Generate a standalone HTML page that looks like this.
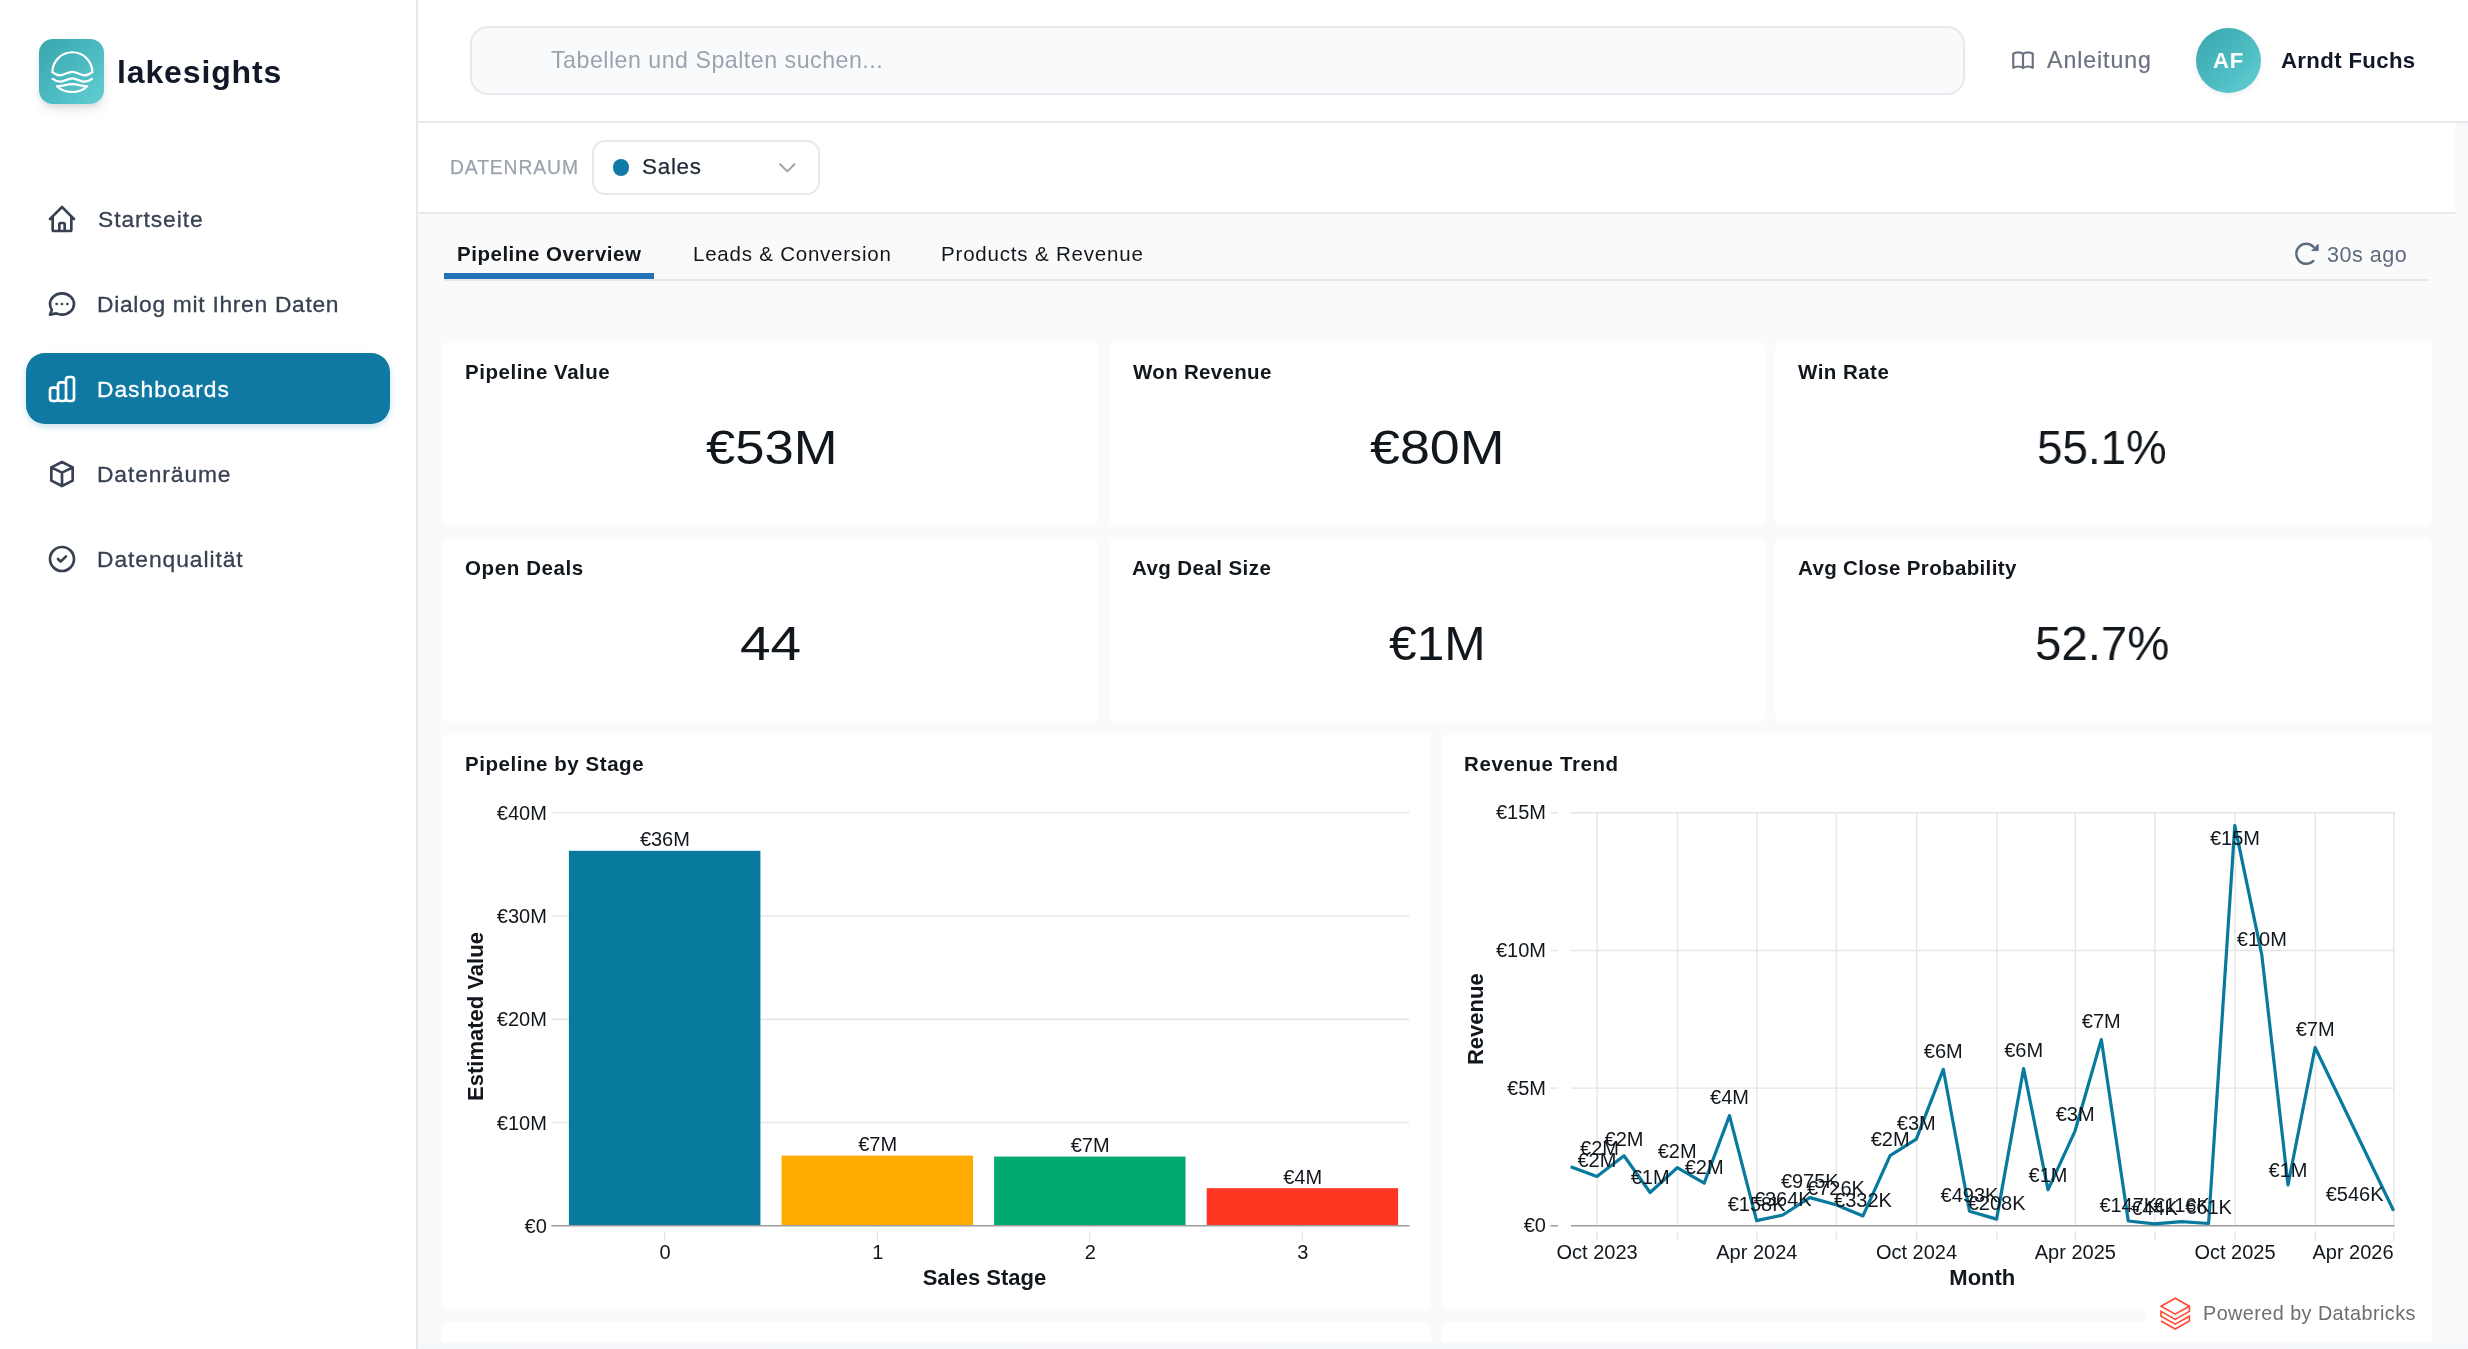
<!DOCTYPE html>
<html lang="de">
<head>
<meta charset="utf-8">
<title>lakesights</title>
<style>
*{box-sizing:border-box;margin:0;padding:0}
html,body{width:2468px;height:1349px;overflow:hidden;background:#fafafa}
body{font-family:"Liberation Sans",sans-serif;color:#111827;position:relative}
.abs{position:absolute}
.t{position:absolute;white-space:nowrap;line-height:1;will-change:transform}
svg{position:absolute;overflow:visible}
svg text{font-family:"Liberation Sans",sans-serif}
.card{position:absolute;background:#fff;border-radius:8px}
</style>
</head>
<body>

<div class="abs" style="left:0;top:0;width:416px;height:1349px;background:#fff"></div>
<div class="abs" style="left:416px;top:0;width:2px;height:1349px;background:#e7e8ec"></div>
<div class="abs" style="left:418px;top:0;width:2050px;height:121px;background:#fff"></div>
<div class="abs" style="left:418px;top:121px;width:2050px;height:2px;background:#e7e9ec"></div>
<div class="abs" style="left:2455px;top:123px;width:13px;height:1226px;background:#f8f9fb"></div>
<div class="abs" style="left:418px;top:123px;width:2037px;height:89px;background:#fff"></div>
<div class="abs" style="left:418px;top:212px;width:2037px;height:2px;background:#e7e9ec"></div>
<div class="abs" style="left:39px;top:39px;width:65.4px;height:65.4px;border-radius:14px;background:linear-gradient(135deg,#38a6ac 0%,#4dbcc2 55%,#62cfd4 100%);box-shadow:0 7px 12px -2px rgba(0,0,0,.11),0 3px 5px -1px rgba(0,0,0,.07)"></div>
<svg style="left:39px;top:39px" width="66" height="66" viewBox="0 0 66 66" fill="none" stroke="#fff" stroke-width="2.2" stroke-linecap="round" stroke-linejoin="round">
<path d="M13.4 33.2A19.95 19.95 0 0 1 53.3 33.2"/>
<path d="M13.4 33.2C16 35.3 18.6 36.5 21.4 36.3C25.6 36 29 32.8 33.3 32.8C37.6 32.8 40.8 36 45 36.3C48 36.5 50.8 35.3 53.3 33.2"/>
<path d="M13.6 39.8C16.4 41.8 19 42.9 21.8 42.7C25.8 42.4 29.1 39.3 33.3 39.3C37.5 39.3 40.6 42.4 44.6 42.7C47.6 42.9 50.4 41.8 53 39.8"/>
<path d="M18 47.3C23 47.3 27.6 45.2 33.3 45.2C39 45.2 43.2 47.3 48 47.3C44.6 51 39.4 53 33.3 53C27.2 53 21.6 51 18 47.3Z"/>
</svg>
<div class="t" style="left:116.99px;top:55.81px;font-size:32px;font-weight:bold;color:#111827;letter-spacing:0.864px;">lakesights</div>
<div class="abs" style="left:26px;top:353px;width:364px;height:70.6px;border-radius:19px;background:#0f79a3;box-shadow:0 3px 6px rgba(15,121,163,.22)"></div>
<div class="t" style="left:98.27px;top:207.60px;font-size:22.8px;color:#374151;letter-spacing:0.925px;-webkit-text-stroke:.3px #374151;">Startseite</div>
<div class="t" style="left:97.43px;top:292.60px;font-size:22.8px;color:#374151;letter-spacing:0.700px;-webkit-text-stroke:.3px #374151;">Dialog mit Ihren Daten</div>
<div class="t" style="left:97.43px;top:377.60px;font-size:22.8px;color:#ffffff;letter-spacing:0.984px;-webkit-text-stroke:.3px #ffffff;">Dashboards</div>
<div class="t" style="left:97.43px;top:462.60px;font-size:22.8px;color:#374151;letter-spacing:0.900px;-webkit-text-stroke:.3px #374151;">Datenräume</div>
<div class="t" style="left:97.43px;top:547.60px;font-size:22.8px;color:#374151;letter-spacing:0.947px;-webkit-text-stroke:.3px #374151;">Datenqualität</div>
<div class="abs" style="left:470px;top:26px;width:1495px;height:69px;border-radius:18px;background:#f9fafb;border:2px solid #e7e9ed"></div>
<div class="t" style="left:550.89px;top:49.06px;font-size:23.2px;color:#9ca3af;letter-spacing:0.501px;">Tabellen und Spalten suchen...</div>
<div class="t" style="left:2046.85px;top:48.86px;font-size:23.2px;color:#6b7280;letter-spacing:0.911px;-webkit-text-stroke:.2px #6b7280;">Anleitung</div>
<div class="abs" style="left:2196px;top:28px;width:65.2px;height:65.2px;border-radius:50%;background:linear-gradient(135deg,#38a6ac 0%,#4dbcc2 55%,#62cfd4 100%);box-shadow:0 2px 5px rgba(0,0,0,.08)"></div>
<div class="t" style="left:2213.37px;top:49.88px;font-size:22px;font-weight:bold;color:#ffffff;letter-spacing:0.894px;">AF</div>
<div class="t" style="left:2281.17px;top:49.71px;font-size:22.2px;font-weight:bold;color:#111827;letter-spacing:0.349px;">Arndt Fuchs</div>
<div class="t" style="left:450.12px;top:157.76px;font-size:19.3px;color:#9ca3af;letter-spacing:0.908px;-webkit-text-stroke:.25px #9ca3af;">DATENRAUM</div>
<div class="abs" style="left:592px;top:140px;width:228px;height:55px;border-radius:13px;background:#fff;border:2px solid #e7e9ed"></div>
<div class="abs" style="left:612.6px;top:159px;width:16.6px;height:16.6px;border-radius:50%;background:#1179a6"></div>
<div class="t" style="left:642.09px;top:156.44px;font-size:22.4px;color:#1f2937;letter-spacing:0.748px;-webkit-text-stroke:.25px #1f2937;">Sales</div>
<div class="abs" style="left:444px;top:279px;width:1985px;height:2px;background:#e7e8ea"></div>
<div class="abs" style="left:444px;top:272.6px;width:210.4px;height:6.6px;background:#2272b9"></div>
<div class="t" style="left:456.75px;top:243.75px;font-size:20.5px;font-weight:bold;color:#11171c;letter-spacing:0.527px;">Pipeline Overview</div>
<div class="t" style="left:692.72px;top:243.75px;font-size:20.5px;color:#11171c;letter-spacing:0.776px;">Leads &amp; Conversion</div>
<div class="t" style="left:940.62px;top:243.75px;font-size:20.5px;color:#11171c;letter-spacing:0.815px;">Products &amp; Revenue</div>
<div class="t" style="left:2327.18px;top:243.52px;font-size:21.6px;color:#5c6c7d;letter-spacing:0.492px;">30s ago</div>
<div class="card" style="left:442.4px;top:341.2px;width:656.1px;height:185.9px"></div>
<div class="card" style="left:1108.5px;top:341.2px;width:656.3px;height:185.9px"></div>
<div class="card" style="left:1774.9px;top:341.2px;width:656.7px;height:185.9px"></div>
<div class="card" style="left:442.4px;top:537.1px;width:656.1px;height:186.2px"></div>
<div class="card" style="left:1108.5px;top:537.1px;width:656.3px;height:186.2px"></div>
<div class="card" style="left:1774.9px;top:537.1px;width:656.7px;height:186.2px"></div>
<div class="t" style="left:465.15px;top:362.15px;font-size:20.5px;font-weight:bold;color:#11171c;letter-spacing:0.530px;">Pipeline Value</div>
<div class="t" style="left:1132.58px;top:362.15px;font-size:20.5px;font-weight:bold;color:#11171c;letter-spacing:0.314px;">Won Revenue</div>
<div class="t" style="left:1798.48px;top:362.15px;font-size:20.5px;font-weight:bold;color:#11171c;letter-spacing:0.472px;">Win Rate</div>
<div class="t" style="left:465.26px;top:558.15px;font-size:20.5px;font-weight:bold;color:#11171c;letter-spacing:0.608px;">Open Deals</div>
<div class="t" style="left:1131.51px;top:558.15px;font-size:20.5px;font-weight:bold;color:#11171c;letter-spacing:0.426px;">Avg Deal Size</div>
<div class="t" style="left:1797.51px;top:558.15px;font-size:20.5px;font-weight:bold;color:#11171c;letter-spacing:0.359px;">Avg Close Probability</div>
<div class="t" style="left:705.83px;top:423.02px;font-size:49px;color:#11171c;transform:scaleX(1.0720);transform-origin:0 0;">€53M</div>
<div class="t" style="left:1370.42px;top:423.02px;font-size:49px;color:#11171c;transform:scaleX(1.0974);transform-origin:0 0;">€80M</div>
<div class="t" style="left:2036.87px;top:423.02px;font-size:49px;color:#11171c;transform:scaleX(0.9339);transform-origin:0 0;">55.1%</div>
<div class="t" style="left:739.99px;top:619.12px;font-size:49px;color:#11171c;transform:scaleX(1.1233);transform-origin:0 0;">44</div>
<div class="t" style="left:1388.95px;top:619.12px;font-size:49px;color:#11171c;transform:scaleX(1.0138);transform-origin:0 0;">€1M</div>
<div class="t" style="left:2034.90px;top:619.12px;font-size:49px;color:#11171c;transform:scaleX(0.9679);transform-origin:0 0;">52.7%</div>
<div class="card" style="left:442.4px;top:733.3px;width:989.1px;height:578px"></div>
<div class="card" style="left:1441.7px;top:733.3px;width:989.9px;height:578px"></div>
<div class="card" style="left:442.4px;top:1321.5px;width:989.1px;height:60px"></div>
<div class="card" style="left:1441.7px;top:1321.5px;width:989.9px;height:60px"></div>
<div class="t" style="left:465.05px;top:754.35px;font-size:20.5px;font-weight:bold;color:#11171c;letter-spacing:0.551px;">Pipeline by Stage</div>
<div class="t" style="left:1464.25px;top:754.35px;font-size:20.5px;font-weight:bold;color:#11171c;letter-spacing:0.595px;">Revenue Trend</div>
<svg style="left:0;top:0" width="2468" height="1349" viewBox="0 0 2468 1349">
<line x1="551.3" x2="1409.2" y1="1122.5" y2="1122.5" stroke="#e5e5e5" stroke-width="1.4"/>
<line x1="551.3" x2="1409.2" y1="1019.2" y2="1019.2" stroke="#e5e5e5" stroke-width="1.4"/>
<line x1="551.3" x2="1409.2" y1="915.9" y2="915.9" stroke="#e5e5e5" stroke-width="1.4"/>
<line x1="551.3" x2="1409.2" y1="812.6" y2="812.6" stroke="#e5e5e5" stroke-width="1.4"/>
<rect x="568.9" y="850.8" width="191.5" height="374.2" fill="#077a9d"/>
<rect x="781.6" y="1155.6" width="191.5" height="69.4" fill="#ffab00"/>
<rect x="994.1" y="1156.6" width="191.4" height="68.4" fill="#00a972"/>
<rect x="1206.7" y="1188.2" width="191.4" height="36.8" fill="#ff3621"/>
<line x1="551.3" x2="1409.6" y1="1225.8" y2="1225.8" stroke="#9c9c9c" stroke-width="1.5"/>
<line x1="664.6" x2="664.6" y1="1231.5" y2="1240.5" stroke="#e5e5e5" stroke-width="1.4"/>
<text x="665.0" y="1259.3" font-size="20" text-anchor="middle" fill="#11171c">0</text>
<line x1="877.4" x2="877.4" y1="1231.5" y2="1240.5" stroke="#e5e5e5" stroke-width="1.4"/>
<text x="877.8" y="1259.3" font-size="20" text-anchor="middle" fill="#11171c">1</text>
<line x1="1089.8" x2="1089.8" y1="1231.5" y2="1240.5" stroke="#e5e5e5" stroke-width="1.4"/>
<text x="1090.2" y="1259.3" font-size="20" text-anchor="middle" fill="#11171c">2</text>
<line x1="1302.4" x2="1302.4" y1="1231.5" y2="1240.5" stroke="#e5e5e5" stroke-width="1.4"/>
<text x="1302.8" y="1259.3" font-size="20" text-anchor="middle" fill="#11171c">3</text>
<text x="664.9" y="846.4" font-size="20" text-anchor="middle" fill="#11171c">€36M</text>
<text x="877.6" y="1151.2" font-size="20" text-anchor="middle" fill="#11171c">€7M</text>
<text x="1090.1" y="1152.2" font-size="20" text-anchor="middle" fill="#11171c">€7M</text>
<text x="1302.7" y="1183.8" font-size="20" text-anchor="middle" fill="#11171c">€4M</text>
<text x="546.8" y="1232.9" font-size="20" text-anchor="end" fill="#11171c">€0</text>
<text x="546.8" y="1129.6" font-size="20" text-anchor="end" fill="#11171c">€10M</text>
<text x="546.8" y="1026.3" font-size="20" text-anchor="end" fill="#11171c">€20M</text>
<text x="546.8" y="923.0" font-size="20" text-anchor="end" fill="#11171c">€30M</text>
<text x="546.8" y="819.7" font-size="20" text-anchor="end" fill="#11171c">€40M</text>
<text x="984.4" y="1285.2" font-size="22" font-weight="bold" text-anchor="middle" fill="#11171c">Sales Stage</text>
<text transform="translate(483.2,1016.5) rotate(-90)" font-size="22" font-weight="bold" text-anchor="middle" fill="#11171c">Estimated Value</text>
<line x1="1571.0" x2="2394.7" y1="1088.1" y2="1088.1" stroke="#e5e5e5" stroke-width="1.4"/>
<line x1="1571.0" x2="2394.7" y1="950.5" y2="950.5" stroke="#e5e5e5" stroke-width="1.4"/>
<line x1="1571.0" x2="2394.7" y1="812.8" y2="812.8" stroke="#e5e5e5" stroke-width="1.4"/>
<line x1="1550.4" x2="1558" y1="1225.8" y2="1225.8" stroke="#9c9c9c" stroke-width="1.5"/>
<text x="1546.0" y="1232.2" font-size="20" text-anchor="end" fill="#11171c">€0</text>
<line x1="1550.4" x2="1558" y1="1088.1" y2="1088.1" stroke="#e5e5e5" stroke-width="1.4"/>
<text x="1546.0" y="1094.5" font-size="20" text-anchor="end" fill="#11171c">€5M</text>
<line x1="1550.4" x2="1558" y1="950.5" y2="950.5" stroke="#e5e5e5" stroke-width="1.4"/>
<text x="1546.0" y="956.9" font-size="20" text-anchor="end" fill="#11171c">€10M</text>
<line x1="1550.4" x2="1558" y1="812.8" y2="812.8" stroke="#e5e5e5" stroke-width="1.4"/>
<text x="1546.0" y="819.2" font-size="20" text-anchor="end" fill="#11171c">€15M</text>
<line x1="1597.2" x2="1597.2" y1="812" y2="1225" stroke="#e5e5e5" stroke-width="1.4"/>
<line x1="1597.2" x2="1597.2" y1="1231.5" y2="1240.5" stroke="#e5e5e5" stroke-width="1.4"/>
<line x1="1677.5" x2="1677.5" y1="812" y2="1225" stroke="#e5e5e5" stroke-width="1.4"/>
<line x1="1677.5" x2="1677.5" y1="1231.5" y2="1240.5" stroke="#e5e5e5" stroke-width="1.4"/>
<line x1="1756.9" x2="1756.9" y1="812" y2="1225" stroke="#e5e5e5" stroke-width="1.4"/>
<line x1="1756.9" x2="1756.9" y1="1231.5" y2="1240.5" stroke="#e5e5e5" stroke-width="1.4"/>
<line x1="1836.3" x2="1836.3" y1="812" y2="1225" stroke="#e5e5e5" stroke-width="1.4"/>
<line x1="1836.3" x2="1836.3" y1="1231.5" y2="1240.5" stroke="#e5e5e5" stroke-width="1.4"/>
<line x1="1916.6" x2="1916.6" y1="812" y2="1225" stroke="#e5e5e5" stroke-width="1.4"/>
<line x1="1916.6" x2="1916.6" y1="1231.5" y2="1240.5" stroke="#e5e5e5" stroke-width="1.4"/>
<line x1="1996.9" x2="1996.9" y1="812" y2="1225" stroke="#e5e5e5" stroke-width="1.4"/>
<line x1="1996.9" x2="1996.9" y1="1231.5" y2="1240.5" stroke="#e5e5e5" stroke-width="1.4"/>
<line x1="2075.4" x2="2075.4" y1="812" y2="1225" stroke="#e5e5e5" stroke-width="1.4"/>
<line x1="2075.4" x2="2075.4" y1="1231.5" y2="1240.5" stroke="#e5e5e5" stroke-width="1.4"/>
<line x1="2154.8" x2="2154.8" y1="812" y2="1225" stroke="#e5e5e5" stroke-width="1.4"/>
<line x1="2154.8" x2="2154.8" y1="1231.5" y2="1240.5" stroke="#e5e5e5" stroke-width="1.4"/>
<line x1="2235.1" x2="2235.1" y1="812" y2="1225" stroke="#e5e5e5" stroke-width="1.4"/>
<line x1="2235.1" x2="2235.1" y1="1231.5" y2="1240.5" stroke="#e5e5e5" stroke-width="1.4"/>
<line x1="2315.4" x2="2315.4" y1="812" y2="1225" stroke="#e5e5e5" stroke-width="1.4"/>
<line x1="2315.4" x2="2315.4" y1="1231.5" y2="1240.5" stroke="#e5e5e5" stroke-width="1.4"/>
<line x1="2393.9" x2="2393.9" y1="812" y2="1225" stroke="#e5e5e5" stroke-width="1.4"/>
<line x1="2393.9" x2="2393.9" y1="1231.5" y2="1240.5" stroke="#e5e5e5" stroke-width="1.4"/>
<line x1="1571.0" x2="2394.7" y1="1225.8" y2="1225.8" stroke="#9c9c9c" stroke-width="1.5"/>
<text x="1597.1" y="1258.9" font-size="20" text-anchor="middle" fill="#11171c">Oct 2023</text>
<text x="1756.8" y="1258.9" font-size="20" text-anchor="middle" fill="#11171c">Apr 2024</text>
<text x="1916.5" y="1258.9" font-size="20" text-anchor="middle" fill="#11171c">Oct 2024</text>
<text x="2075.3" y="1258.9" font-size="20" text-anchor="middle" fill="#11171c">Apr 2025</text>
<text x="2235.0" y="1258.9" font-size="20" text-anchor="middle" fill="#11171c">Oct 2025</text>
<text x="2393.6" y="1258.9" font-size="20" text-anchor="end" fill="#11171c">Apr 2026</text>
<text x="1982.3" y="1285.3" font-size="22" font-weight="bold" text-anchor="middle" fill="#11171c">Month</text>
<text transform="translate(1482.8,1019.2) rotate(-90)" font-size="22" font-weight="bold" text-anchor="middle" fill="#11171c">Revenue</text>
<polyline fill="none" stroke="#077a9d" stroke-width="3.2" stroke-linejoin="round" stroke-linecap="butt" points="1570.7,1166.7 1596.9,1176.5 1624.0,1155.7 1650.1,1192.5 1677.2,1167.7 1704.2,1183.1 1729.5,1115.6 1756.6,1220.6 1782.8,1215.0 1809.8,1197.6 1836.0,1204.8 1863.0,1215.9 1890.1,1155.7 1916.3,1139.1 1943.3,1069.3 1969.5,1211.3 1996.6,1219.1 2023.6,1068.6 2048.0,1189.8 2075.1,1130.8 2101.3,1039.6 2128.3,1221.0 2154.5,1223.9 2181.6,1221.6 2208.6,1223.5 2234.8,825.6 2261.8,954.9 2288.0,1185.0 2315.1,1047.5 2393.6,1210.7"/>
<text x="1599.5" y="1155.2" font-size="20" text-anchor="middle" fill="#11171c">€2M</text>
<text x="1596.9" y="1167.1" font-size="20" text-anchor="middle" fill="#11171c">€2M</text>
<text x="1624.0" y="1146.3" font-size="20" text-anchor="middle" fill="#11171c">€2M</text>
<text x="1650.1" y="1184.3" font-size="20" text-anchor="middle" fill="#11171c">€1M</text>
<text x="1677.2" y="1158.3" font-size="20" text-anchor="middle" fill="#11171c">€2M</text>
<text x="1704.2" y="1173.7" font-size="20" text-anchor="middle" fill="#11171c">€2M</text>
<text x="1729.5" y="1104.4" font-size="20" text-anchor="middle" fill="#11171c">€4M</text>
<text x="1756.6" y="1211.2" font-size="20" text-anchor="middle" fill="#11171c">€158K</text>
<text x="1782.8" y="1205.6" font-size="20" text-anchor="middle" fill="#11171c">€364K</text>
<text x="1809.8" y="1188.2" font-size="20" text-anchor="middle" fill="#11171c">€975K</text>
<text x="1836.0" y="1195.4" font-size="20" text-anchor="middle" fill="#11171c">€726K</text>
<text x="1863.0" y="1206.5" font-size="20" text-anchor="middle" fill="#11171c">€332K</text>
<text x="1890.1" y="1146.3" font-size="20" text-anchor="middle" fill="#11171c">€2M</text>
<text x="1916.3" y="1129.7" font-size="20" text-anchor="middle" fill="#11171c">€3M</text>
<text x="1943.3" y="1058.1" font-size="20" text-anchor="middle" fill="#11171c">€6M</text>
<text x="1969.5" y="1201.9" font-size="20" text-anchor="middle" fill="#11171c">€493K</text>
<text x="1996.6" y="1209.7" font-size="20" text-anchor="middle" fill="#11171c">€208K</text>
<text x="2023.6" y="1057.4" font-size="20" text-anchor="middle" fill="#11171c">€6M</text>
<text x="2048.0" y="1182.0" font-size="20" text-anchor="middle" fill="#11171c">€1M</text>
<text x="2075.1" y="1121.4" font-size="20" text-anchor="middle" fill="#11171c">€3M</text>
<text x="2101.3" y="1028.4" font-size="20" text-anchor="middle" fill="#11171c">€7M</text>
<text x="2128.3" y="1211.6" font-size="20" text-anchor="middle" fill="#11171c">€147K</text>
<text x="2154.5" y="1214.5" font-size="20" text-anchor="middle" fill="#11171c">€44K</text>
<text x="2181.6" y="1212.2" font-size="20" text-anchor="middle" fill="#11171c">€116K</text>
<text x="2208.6" y="1214.1" font-size="20" text-anchor="middle" fill="#11171c">€61K</text>
<text x="2235.0" y="845.4" font-size="20" text-anchor="middle" fill="#11171c">€15M</text>
<text x="2261.8" y="945.5" font-size="20" text-anchor="middle" fill="#11171c">€10M</text>
<text x="2288.0" y="1177.4" font-size="20" text-anchor="middle" fill="#11171c">€1M</text>
<text x="2315.1" y="1036.3" font-size="20" text-anchor="middle" fill="#11171c">€7M</text>
<text x="2354.6" y="1201.3" font-size="20" text-anchor="middle" fill="#11171c">€546K</text>
</svg>
<svg style="left:46.0px;top:203.4px" width="32" height="32" viewBox="0 0 24 24" fill="none" stroke="#374151" stroke-width="2" stroke-linecap="round" stroke-linejoin="round"><path d="M3 12l2-2m0 0l7-7 7 7M5 10v10a1 1 0 001 1h3m10-11l2 2m-2-2v10a1 1 0 01-1 1h-3m-6 0a1 1 0 001-1v-4a1 1 0 011-1h2a1 1 0 011 1v4a1 1 0 001 1m-6 0h6"/></svg>
<svg style="left:46.0px;top:288.4px" width="32" height="32" viewBox="0 0 24 24" fill="none" stroke="#374151" stroke-width="2" stroke-linecap="round" stroke-linejoin="round"><path d="M8 12h.01M12 12h.01M16 12h.01M21 12c0 4.418-4.03 8-9 8a9.863 9.863 0 01-4.255-.949L3 20l1.395-3.72C3.512 15.042 3 13.574 3 12c0-4.418 4.03-8 9-8s9 3.582 9 8z"/></svg>
<svg style="left:46.0px;top:373.4px" width="32" height="32" viewBox="0 0 24 24" fill="none" stroke="#ffffff" stroke-width="2" stroke-linecap="round" stroke-linejoin="round"><path d="M9 19v-6a2 2 0 00-2-2H5a2 2 0 00-2 2v6a2 2 0 002 2h2a2 2 0 002-2zm0 0V9a2 2 0 012-2h2a2 2 0 012 2v10m-6 0a2 2 0 002 2h2a2 2 0 002-2m0 0V5a2 2 0 012-2h2a2 2 0 012 2v14a2 2 0 01-2 2h-2a2 2 0 01-2-2z"/></svg>
<svg style="left:46.0px;top:458.4px" width="32" height="32" viewBox="0 0 24 24" fill="none" stroke="#374151" stroke-width="2" stroke-linecap="round" stroke-linejoin="round"><path d="M20 7l-8-4-8 4m16 0l-8 4m8-4v10l-8 4m0-10L4 7m8 4v10M4 7v10l8 4"/></svg>
<svg style="left:46.0px;top:543.4px" width="32" height="32" viewBox="0 0 24 24" fill="none" stroke="#374151" stroke-width="2" stroke-linecap="round" stroke-linejoin="round"><path d="M9 12l2 2 4-4m6 2a9 9 0 11-18 0 9 9 0 0118 0z"/></svg>
<svg style="left:2010.0px;top:47.3px" width="26" height="26" viewBox="0 0 24 24" fill="none" stroke="#6b7280" stroke-width="2" stroke-linecap="round" stroke-linejoin="round"><path d="M12 6.253v13m0-13C10.832 5.477 9.246 5 7.5 5S4.168 5.477 3 6.253v13C4.168 18.477 5.754 18 7.5 18s3.332.477 4.5 1.253m0-13C13.168 5.477 14.754 5 16.5 5c1.747 0 3.332.477 4.5 1.253v13C19.832 18.477 18.247 18 16.5 18c-1.746 0-3.332.477-4.5 1.253"/></svg>
<svg style="left:775.4px;top:155.1px" width="24.6" height="24.6" viewBox="0 0 24 24" fill="none" stroke="#9ca3af" stroke-width="2" stroke-linecap="round" stroke-linejoin="round"><path d="M19 9l-7 7-7-7"/></svg>
<svg style="left:0;top:0" width="2468" height="300" viewBox="0 0 2468 300"><path d="M2313.3 260.9A10 10 0 1 1 2313.5 246.9" fill="none" stroke="#5c6c7d" stroke-width="2.4" stroke-linecap="round"/><path d="M2318.1 244.3V250.6H2311.8Z" fill="#5c6c7d" stroke="#5c6c7d" stroke-width="1" stroke-linejoin="round"/></svg>
<div class="abs" style="left:2145.6px;top:1292px;width:286px;height:49.6px;background:#fff;border-radius:0 0 0 10px"></div>
<svg style="left:2159.8px;top:1296.8px" width="31" height="33" viewBox="0 0 31 33" fill="none" stroke="#ff4a33" stroke-width="1.6" stroke-linejoin="miter">
<path d="M29.4 9.2L15.2 1.2L1 9.2L15.2 17.2L29.4 9.2V14.4L15.2 22.4L1 14.4V19.2L15.2 27.2L29.4 19.2V24L15.2 32L1 24"/>
</svg>
<div class="t" style="left:2203.18px;top:1303.84px;font-size:19.8px;color:#6e6e6e;letter-spacing:0.448px;">Powered by Databricks</div>
<div class="abs" style="left:418px;top:1341.5px;width:2050px;height:8px;background:linear-gradient(180deg,#f9fafc,#f3f6fa)"></div>
</body>
</html>
